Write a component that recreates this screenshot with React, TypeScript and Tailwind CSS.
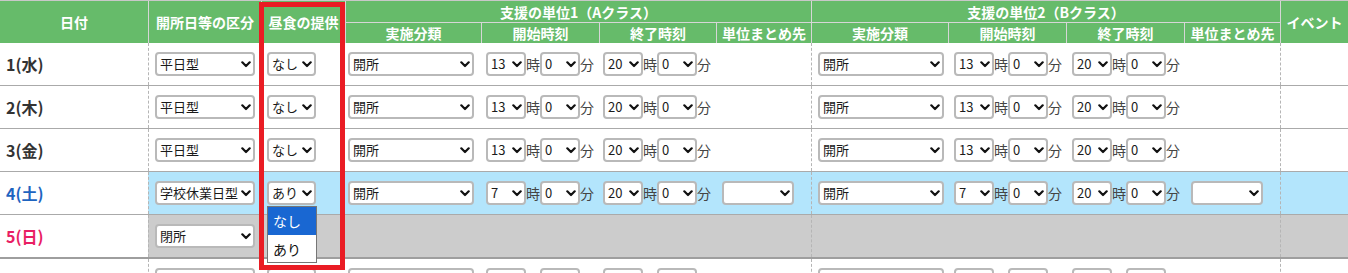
import React from "react";

const Chevron = () => (
  <svg width="10" height="7" viewBox="0 0 10 7" className="shrink-0">
    <path d="M1.3 1.3 L5 5 L8.7 1.3" fill="none" stroke="#111" strokeWidth="2.2" strokeLinecap="round" strokeLinejoin="round" />
  </svg>
);

function Sel({ text = "", w }: { text?: string; w: string }) {
  return (
    <div
      className={`${w} h-[24px] shrink-0 flex items-center justify-between border-2 border-[#b9b9b9] rounded-[4px] bg-white pl-[3px] pr-[2px] text-[13px] text-[#1a1a1a] leading-[18px]`}
    >
      <span className="whitespace-nowrap">{text}</span>
      <Chevron />
    </div>
  );
}

const Unit = ({ t }: { t: string }) => (
  <span className="text-[14px] text-[#444] leading-[18px] w-[14px] shrink-0">{t}</span>
);

type RowData = {
  date: string;
  dateColor: string;
  kubun: string;
  lunch: string;
  startH: string;
  showMatome: boolean;
};

function TimePair({ h, m, pl }: { h: string; m: string; pl: string }) {
  return (
    <div className={`flex items-center ${pl}`}>
      <Sel w="w-[40px]" text={h} />
      <Unit t="時" />
      <Sel w="w-[40px]" text={m} />
      <Unit t="分" />
    </div>
  );
}

function DataRow({ r, bg }: { r: RowData; bg: string }) {
  return (
    <div className="flex h-[43px] border-b border-[#aaaaaa]">
      <div className={`w-[148px] shrink-0 flex items-center pl-[6px] font-bold text-[16px] ${r.dateColor}`}>{r.date}</div>
      <div className={`flex flex-1 ${bg}`}>
        <div className="w-[113px] shrink-0 flex items-center pl-[6px] border-l border-dashed border-[#b5b5b5]">
          <Sel w="w-[100px]" text={r.kubun} />
        </div>
        <div className="w-[84px] shrink-0 flex items-center pl-[6px]">
          <Sel w="w-[49px]" text={r.lunch} />
        </div>
        <div className="w-[136px] shrink-0 flex items-center pl-[3px]">
          <Sel w="w-[126px]" text="開所" />
        </div>
        <div className="w-[118px] shrink-0 flex items-center">
          <TimePair h={r.startH} m="0" pl="pl-[5px]" />
        </div>
        <div className="w-[117px] shrink-0 flex items-center">
          <TimePair h="20" m="0" pl="pl-[4px]" />
        </div>
        <div className="w-[95px] shrink-0 flex items-center pl-[6px]">
          {r.showMatome && <Sel w="w-[72px]" />}
        </div>
        <div className="w-[137px] shrink-0 flex items-center pl-[6px] border-l border-dashed border-[#b5b5b5]">
          <Sel w="w-[126px]" text="開所" />
        </div>
        <div className="w-[118px] shrink-0 flex items-center">
          <TimePair h={r.startH} m="0" pl="pl-[6px]" />
        </div>
        <div className="w-[118px] shrink-0 flex items-center">
          <TimePair h="20" m="0" pl="pl-[6px]" />
        </div>
        <div className="w-[96px] shrink-0 flex items-center pl-[7px]">
          {r.showMatome && <Sel w="w-[72px]" />}
        </div>
        <div className="flex-1 border-l border-dashed border-[#b5b5b5]" />
      </div>
    </div>
  );
}

const H = "flex items-center justify-center text-white font-bold text-[14px] leading-[18px] whitespace-nowrap border-[#d6d6d6]";

export default function App() {
  const weekday = (date: string): RowData => ({
    date,
    dateColor: "text-[#333333]",
    kubun: "平日型",
    lunch: "なし",
    startH: "13",
    showMatome: false,
  });
  return (
    <div
      className="relative w-[1348px] h-[273px] bg-white overflow-hidden"
      style={{ fontFamily: '"Noto Sans CJK JP", "Noto Sans", sans-serif' }}
    >
      <div className="border-t border-[#c8c8c8]">
        <div className="grid grid-cols-[148px_113px_84px_136px_118px_117px_95px_137px_118px_118px_96px_68px] grid-rows-[22px_20px] bg-[#66bb6a]">
          <div className={`${H} row-span-2`}>日付</div>
          <div className={`${H} row-span-2 border-l`}>開所日等の区分</div>
          <div className={`${H} row-span-2 border-l`}>昼食の提供</div>
          <div className={`${H} col-span-4 border-l border-b pt-[1px]`}>支援の単位1（Aクラス）</div>
          <div className={`${H} col-span-4 border-l border-b pt-[1px]`}>支援の単位2（Bクラス）</div>
          <div className={`${H} row-span-2 border-l`}>イベント</div>
          <div className={`${H} border-l`}>実施分類</div>
          <div className={`${H} border-l`}>開始時刻</div>
          <div className={`${H} border-l`}>終了時刻</div>
          <div className={`${H} border-l`}>単位まとめ先</div>
          <div className={`${H} border-l`}>実施分類</div>
          <div className={`${H} border-l`}>開始時刻</div>
          <div className={`${H} border-l`}>終了時刻</div>
          <div className={`${H} border-l`}>単位まとめ先</div>
        </div>

        <DataRow r={weekday("1(水)")} bg="bg-white" />
        <DataRow r={weekday("2(木)")} bg="bg-white" />
        <DataRow r={weekday("3(金)")} bg="bg-white" />
        <DataRow
          r={{
            date: "4(土)",
            dateColor: "text-[#1e64c0]",
            kubun: "学校休業日型",
            lunch: "あり",
            startH: "7",
            showMatome: true,
          }}
          bg="bg-[#b3e5fc]"
        />
        <div className="flex h-[44px] border-b-2 border-[#9e9e9e]">
          <div className="w-[148px] shrink-0 flex items-center pl-[6px] font-bold text-[16px] text-[#e91e63]">5(日)</div>
          <div className="flex flex-1 bg-[#cccccc]">
            <div className="w-[113px] shrink-0 flex items-center pl-[6px] border-l border-dashed border-[#b5b5b5]">
              <Sel w="w-[100px]" text="閉所" />
            </div>
            <div className="w-[550px] shrink-0" />
            <div className="w-[469px] shrink-0 border-l border-dashed border-[#b5b5b5]" />
            <div className="flex-1 border-l border-dashed border-[#b5b5b5]" />
          </div>
        </div>
        <DataRow r={weekday("6(月)")} bg="bg-white" />
      </div>

      {/* open dropdown list */}
      <div className="absolute left-[267px] top-[206px] w-[50px] border border-[#767676] bg-white text-[14px] leading-[18px]">
        <div className="h-[28px] flex items-center pl-[5px] bg-[#1967d2] text-white">なし</div>
        <div className="h-[27px] flex items-center pl-[5px] text-[#111]">あり</div>
      </div>

      {/* red highlight frame */}
      <div className="absolute left-[259px] top-[2px] w-[86px] h-[268px] border-[5px] border-[#ea1c24] pointer-events-none" />
    </div>
  );
}
